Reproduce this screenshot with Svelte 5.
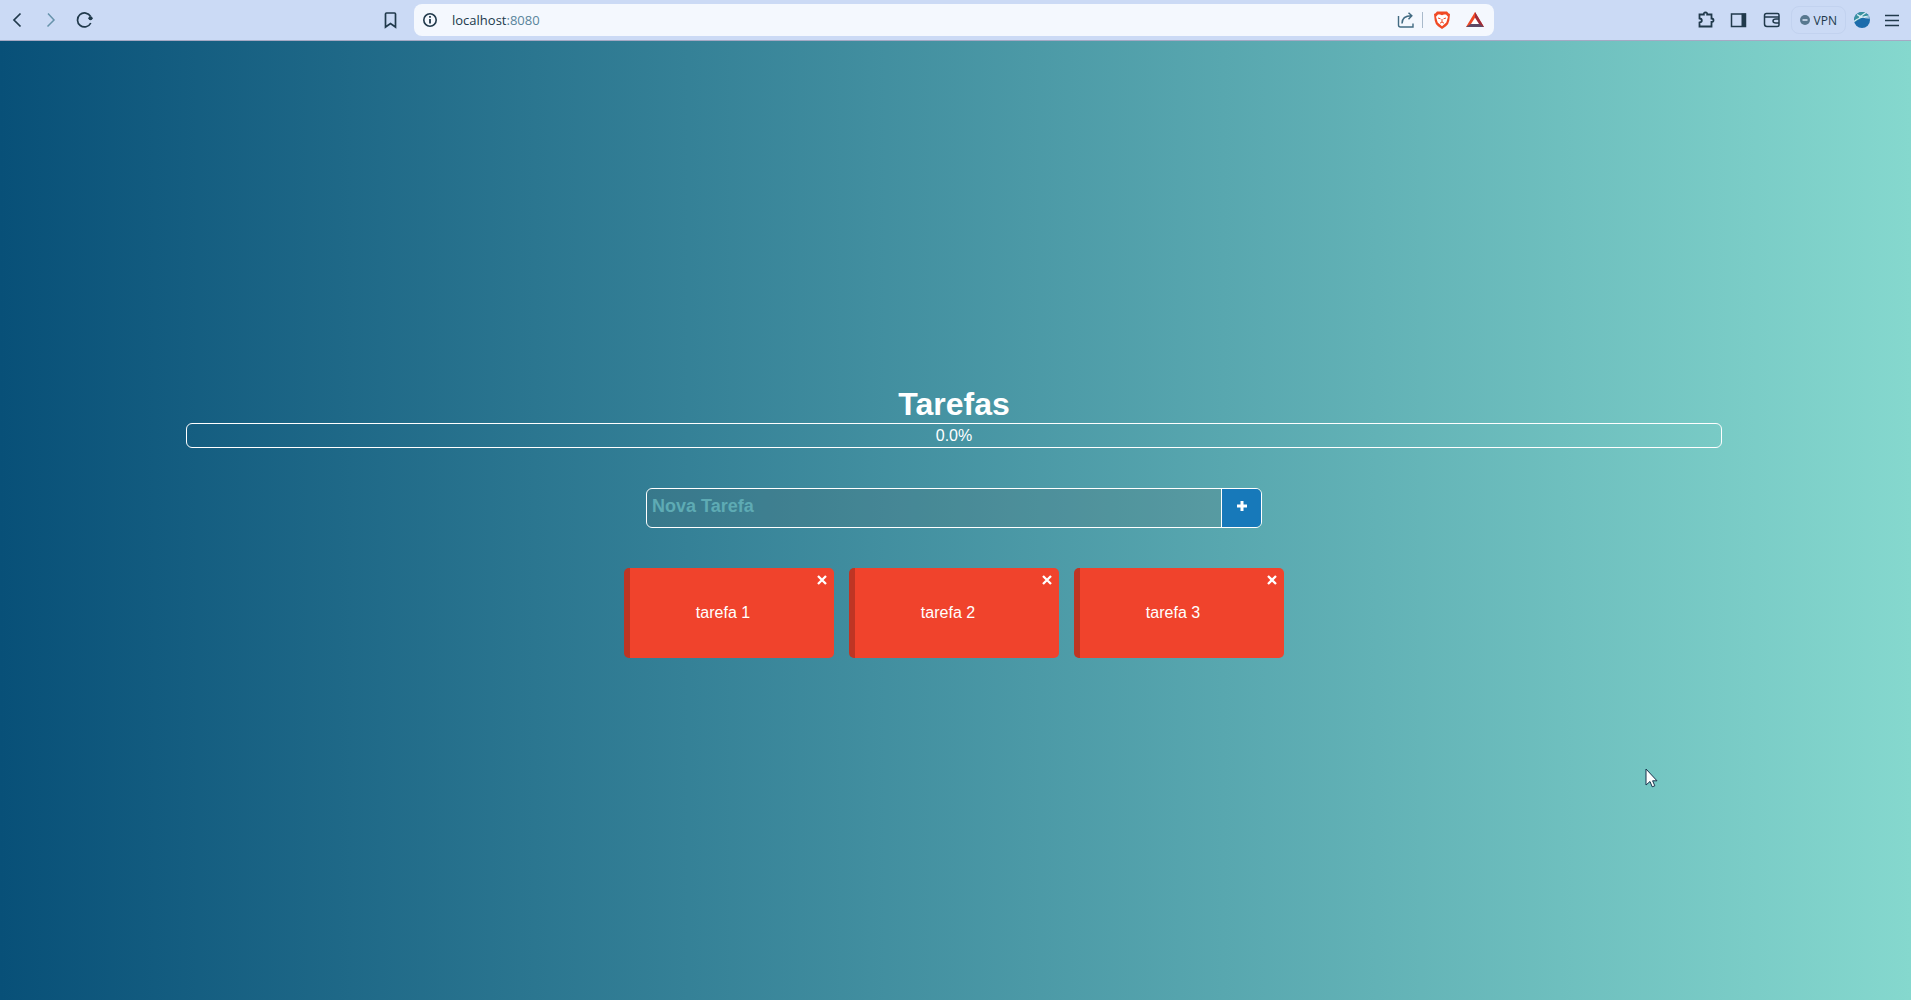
<script>
  let tasks = $state(['tarefa 1', 'tarefa 2', 'tarefa 3']);
  let draft = $state('');

  function add(event) {
    event.preventDefault();
    if (draft.trim()) tasks.push(draft.trim());
    draft = '';
  }

  function remove(index) {
    tasks.splice(index, 1);
  }
</script>

<div class="window">
  <header class="toolbar">
    <div class="side">
      <nav class="history" aria-label="History">
        <button class="icon" aria-label="Back">
          <svg width="34" height="32" viewBox="0 0 34 32"><path d="M20.500 9.500 14 16l6.500 6.500" stroke-width="1.700" /></svg>
        </button>
        <button class="icon faded" aria-label="Forward">
          <svg width="34" height="32" viewBox="0 0 34 32"><path d="M14 9.500 20 16l-6.500 6.500" stroke-width="1.500" /></svg>
        </button>
        <button class="icon" aria-label="Reload">
          <svg width="34" height="32" viewBox="0 0 34 32">
            <path d="M22.600 12.500A7 7 0 1 0 22.800 19" stroke-width="1.700" />
            <circle cx="22.500" cy="14.300" r="2" class="ink" /><path d="M20.500 14.300h4" stroke-width="1.200" />
          </svg>
        </button>
      </nav>
      <button class="icon bookmark" aria-label="Bookmark">
        <svg width="20" height="32" viewBox="0 0 20 32"><path d="M6.500 9h8q1 0 1 1v13l-5-3.500-5 3.500V10q0-1 1-1z" stroke-width="1.700" /></svg>
      </button>
    </div>

    <div class="address">
      <button class="icon" aria-label="Site information">
        <svg width="32" height="32" viewBox="0 0 32 32">
          <circle cx="16" cy="16" r="6.200" stroke-width="1.600" /><path d="M16 15v4.500M16 12v1.700" stroke-width="1.800" />
        </svg>
      </button>
      <span class="url">localhost<span class="port">:8080</span></span>
      <button class="icon share" aria-label="Share">
        <svg width="24" height="32" viewBox="0 0 24 32">
          <path d="M4.500 12v9q0 2 2 2h12.500v-3.500" stroke-width="1.400" />
          <path d="M8 19.500c0-5 3-7.700 9.500-7.700M14.500 8.700l3.300 3.100-3.300 3.400" stroke-width="1.500" />
        </svg>
      </button>
      <span class="divider"></span>
      <button class="icon" aria-label="Shields">
        <svg width="34" height="32" viewBox="0 0 34 32">
          <path d="M12 7.500h10l1.500 1.800 1.500.700-.700 6.500q-.700 4-3.300 5.800L17 25l-4-2.700q-2.600-1.800-3.300-5.800L9 10l1.500-.700z" class="lion" />
          <path d="M13 10.500h2l2 .800 2-.800h2l2 2.300-1.700 5.700-4.300 3.700-4.300-3.700L11 12.800z" class="face" />
          <path d="M13 14l2.500.800M21 14l-2.500.800M17 15v3M15 19.200l2-1.200 2 1.200" class="lines" />
        </svg>
      </button>
      <button class="icon rewards" aria-label="Rewards">
        <svg width="32" height="32" viewBox="0 0 32 32">
          <path d="M16 8 7 23h18z" fill="#f04824" stroke="none" />
          <path d="M16 8l9 15-5.500-3L16 14z" fill="#9e2c3a" stroke="none" />
          <path d="M7 23h18l-5-3.300h-8z" fill="#5d4966" stroke="none" />
          <path d="M16 13.700 12 20h8z" fill="#fff" stroke="none" />
        </svg>
      </button>
    </div>

    <div class="side end">
      <button class="icon" aria-label="Extensions">
        <svg width="33" height="32" viewBox="0 0 33 32"><path d="M10.500 10.500h4.300q-.300-2 1.700-2t1.700 2h4.300v4q2 0 2 1.800t-2 1.700v4.500h-12v-4q2.300-.200 2.300-2t-2.300-2z" stroke-width="1.800" /></svg>
      </button>
      <button class="icon" aria-label="Sidebar">
        <svg width="33" height="32" viewBox="0 0 33 32"><rect x="9.500" y="10" width="14" height="12.500" stroke-width="1.500" /><path d="M19.500 9.500H24V23h-4.500z" class="ink" /></svg>
      </button>
      <button class="icon" aria-label="Wallet">
        <svg width="34" height="32" viewBox="0 0 34 32">
          <path d="M24 12.500V11q0-1.500-1.500-1.500h-11q-2 0-2 2V20q0 2.500 2.500 2.500h10q2 0 2-1.500V13H10M24 15h-3q-3 0-3 2t3 2h3" stroke-width="1.500" />
        </svg>
      </button>
      <button class="vpn">
        <svg width="10" height="10" viewBox="0 0 10 10"><circle cx="5" cy="5" r="5" fill="#58788f" stroke="none" /><path d="M2.500 5h5" stroke="#dce7f8" stroke-width="1.500" /></svg>
        VPN
      </button>
      <button class="icon" aria-label="Profile">
        <svg width="32" height="32" viewBox="0 0 32 32">
          <circle cx="16" cy="16" r="8" fill="#1c6cab" stroke="none" />
          <path d="M9 12q7-8 14 0l-6 1-8 5q-1.500-3 0-6z" fill="#38929f" stroke="none" />
          <path d="M8 17.500q5-4.500 15-5.500M11 10.500q4 3 12.500 3.500M13 13.500l7-5" stroke="#d8ecf5" stroke-width="1.200" />
        </svg>
      </button>
      <button class="icon" aria-label="Menu">
        <svg width="28" height="32" viewBox="0 0 28 32"><path d="M7 11.500h14M7 16.500h14M7 21.500h14" stroke-width="1.400" /></svg>
      </button>
    </div>
  </header>

  <main>
    <h1>Tarefas</h1>
    <div class="progress" role="progressbar" aria-label="Tarefas" aria-valuenow="0" aria-valuemin="0" aria-valuemax="100">0.0%</div>
    <form onsubmit={add}>
      <input type="text" aria-label="Nova Tarefa" placeholder="Nova Tarefa" bind:value={draft} />
      <button class="add" aria-label="Adicionar">
        <svg width="10" height="10" viewBox="0 0 10 10"><path d="M5 0v10M0 5h10" stroke="#fff" stroke-width="3" /></svg>
      </button>
    </form>
    <ul class="tasks">
      {#each tasks as task, i}
        <li>
          <span>{task}</span>
          <button class="close" aria-label={`Remover ${task}`} onclick={() => remove(i)}>
            <svg width="10" height="10" viewBox="0 0 10 10"><path d="M1 1l8 8M9 1l-8 8" stroke="#fff" stroke-width="2.300" /></svg>
          </button>
        </li>
      {/each}
    </ul>
  </main>

  <svg class="pointer" width="14" height="21" viewBox="0 0 14 21" aria-hidden="true">
    <path d="M1 1v16l4-3.500 2.200 5.300 2.600-1-2.200-5H12z" fill="#fff" stroke="#18334c" stroke-width="1" />
  </svg>
</div>

<style>
  :global(body) {
    margin: 0;
  }

  .window {
    position: relative;
    display: flex;
    flex-direction: column;
    min-height: 100vh;
    font-family: "Liberation Sans", Arial, sans-serif;
    font-size: 16px;
    color: #fff;
    background: linear-gradient(to right, #085078, #85d8ce);
  }

  button {
    display: flex;
    align-items: center;
    justify-content: center;
    padding: 0;
    border: 0;
    background: none;
    color: inherit;
    cursor: pointer;
  }

  svg {
    display: block;
    fill: none;
    stroke: currentColor;
  }

  .toolbar {
    display: grid;
    grid-template-columns: 1fr minmax(0, 1080px) 1fr;
    align-items: center;
    height: 40px;
    padding-right: 3px;
    border-bottom: 1px solid #a5a9c4;
    background: #cbdaf5;
    color: #20394b;
  }

  .side {
    display: flex;
    align-items: center;
    justify-content: space-between;
  }

  .history {
    display: flex;
  }

  .bookmark {
    margin-right: 14px;
  }

  .faded {
    color: #6793ab;
  }

  .end {
    justify-content: flex-end;
    padding-right: 2px;
  }

  .ink {
    fill: currentColor;
    stroke: none;
  }

  .address {
    display: flex;
    align-items: center;
    height: 32px;
    border-radius: 8px;
    background: #f4f8fe;
  }

  .url {
    flex: 1;
    padding-left: 6px;
    font-family: "Open Sans", sans-serif;
    font-size: 13px;
    line-height: 20px;
  }

  .port {
    color: #58849b;
  }

  .share {
    margin-right: 4px;
    color: #426b82;
  }

  .divider {
    width: 1px;
    height: 16px;
    margin-right: 2px;
    background: #a9bacb;
  }

  .lion {
    fill: #f04a25;
    stroke: none;
  }

  .face {
    fill: #fff;
    stroke: none;
  }

  .lines {
    stroke: #f04a25;
    stroke-width: 1;
  }

  .rewards {
    margin-right: 3px;
  }

  .vpn {
    gap: 4px;
    box-sizing: border-box;
    height: 28px;
    padding: 0 8px;
    margin-left: 2px;
    border: 1px solid #c2d2ef;
    border-radius: 8px;
    font-family: "Open Sans", sans-serif;
    font-size: 12px;
  }

  main {
    flex: 1;
    display: flex;
    flex-direction: column;
    align-items: center;
    justify-content: center;
    padding: 2px 3px 0 0;
  }

  h1 {
    margin: 0;
    font-size: 32px;
    line-height: 37px;
  }

  .progress {
    box-sizing: border-box;
    width: calc(100% - 372px);
    border: 1px solid #fff;
    border-radius: 6px;
    line-height: 23px;
    text-align: center;
  }

  form {
    display: flex;
    box-sizing: border-box;
    width: 616px;
    max-width: 100%;
    height: 40px;
    margin: 40px 0;
    border: 1px solid #fff;
    border-radius: 6px;
    overflow: hidden;
  }

  input {
    flex: 1;
    min-width: 0;
    padding: 0 5px 2px;
    border: 0;
    outline: 0;
    background: rgba(85, 85, 85, 0.15);
    color: #fff;
    font: bold 18px "Liberation Sans", Arial, sans-serif;
  }

  input::placeholder {
    color: #5eabb4;
    opacity: 1;
  }

  .add {
    width: 40px;
    padding-bottom: 3px;
    border-left: 1px solid #fff;
    background: #1779ba;
  }

  .tasks {
    display: flex;
    flex-wrap: wrap;
    justify-content: center;
    gap: 15px;
    margin: 0;
    padding: 0;
    list-style: none;
  }

  li {
    position: relative;
    display: flex;
    align-items: center;
    justify-content: center;
    box-sizing: border-box;
    width: 210px;
    height: 90px;
    padding-right: 18px;
    border-left: 6px solid #bf3524;
    border-radius: 5px;
    background: #f0432c;
  }

  .close {
    position: absolute;
    top: 7px;
    right: 7px;
  }

  .pointer {
    position: absolute;
    left: 1645px;
    top: 768px;
  }
</style>
